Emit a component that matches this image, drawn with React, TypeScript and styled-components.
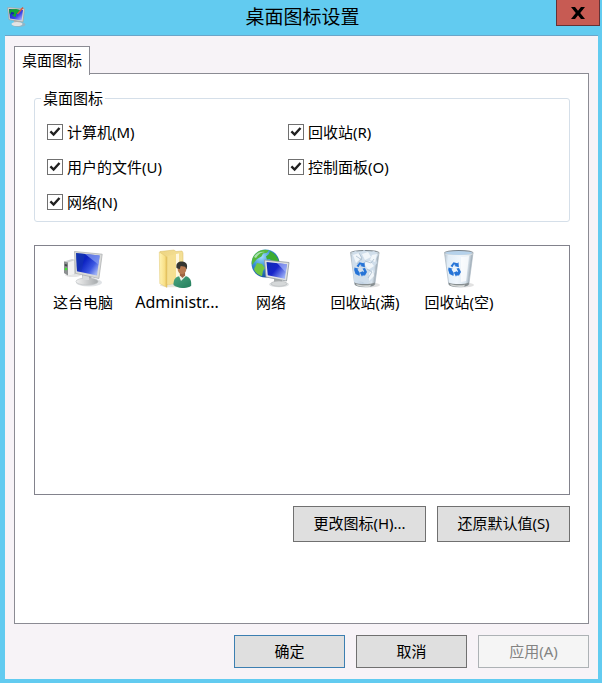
import React from 'react';
import styled, { createGlobalStyle } from 'styled-components';

const GlobalStyle = createGlobalStyle`
  * { box-sizing: border-box; }
  body {
    margin: 0;
    background: #62cbf0;
    color: #000;
    font-family: "Noto Sans", "Noto Sans CJK SC", sans-serif;
    font-size: 15px;
    line-height: 20px;
  }
`;

const Window = styled.main`
  display: flex;
  flex-direction: column;
  min-height: 100vh;
  padding: 0 4px 4px 5px;
  background: #62cbf0;
`;

const TitleBar = styled.header`
  display: grid;
  grid-template-columns: 1fr auto 1fr;
  height: 35px;
  margin-right: -2px;
`;

const TitleIcon = styled.div`
  padding: 6px 0 0 2px;
  svg { display: block; }
`;

const Title = styled.h1`
  margin: 0;
  font-size: 19px;
  font-weight: 400;
  line-height: 35px;
`;

const CloseButton = styled.button`
  display: grid;
  place-items: center;
  justify-self: end;
  width: 44px;
  height: 26px;
  margin: 0;
  padding: 0;
  border: 1px solid #633236;
  border-top: 0;
  background: #c75b53;
`;

const Client = styled.section`
  display: flex;
  flex: 1;
  flex-direction: column;
  padding: 10px 9px 11px;
  border-top: 1px solid #6ba5c9;
  background: #f7f3f7;
`;

const TabList = styled.div`
  display: flex;
`;

const Tab = styled.button`
  z-index: 1;
  height: 29px;
  margin: 0 0 -2px;
  padding: 0 7px 3px;
  border: 1px solid #8b8b93;
  border-bottom: 0;
  background: #fff;
  color: inherit;
  font: inherit;
`;

const Panel = styled.div`
  display: flex;
  flex: 1;
  flex-direction: column;
  padding: 14px 18px 80px 19px;
  border: 1px solid #8b8b93;
  background: #fff;
`;

const Group = styled.fieldset`
  min-width: 0;
  margin: 0 0 23px;
  padding: 0 40px 9px 6px;
  border: 1px solid #d5dfe9;
  border-radius: 3px;
  legend {
    padding: 0 2px;
  }
`;

const Options = styled.div`
  display: grid;
  grid-template-columns: 1fr 1fr;
  row-gap: 15px;
  padding: 14px 0 0 6px;
`;

const Option = styled.label<{ $column: number }>`
  grid-column: ${(p) => p.$column};
  display: flex;
  align-items: center;
  gap: 4px;
`;

const CheckWrap = styled.span`
  display: grid;
  place-items: center;
  > * { grid-area: 1 / 1; }
  svg { pointer-events: none; visibility: hidden; }
  input:checked + svg { visibility: visible; }
`;

const CheckBox = styled.input`
  appearance: none;
  width: 16px;
  height: 16px;
  margin: 0;
  border: 1px solid #707070;
  background: #fff;
`;

const IconList = styled.ul`
  display: flex;
  flex-wrap: wrap;
  align-content: flex-start;
  min-height: 250px;
  margin: 0;
  padding: 2px 1px;
  border: 1px solid #82828c;
  list-style: none;
`;

const IconItem = styled.li<{ $latin?: boolean }>`
  display: flex;
  flex-direction: column;
  align-items: center;
  gap: 4px;
  width: 94px;
  font-size: ${(p) => (p.$latin ? 16 : 15)}px;
`;

const ButtonRow = styled.div`
  display: flex;
  justify-content: flex-end;
  gap: 11px;
  margin-top: 11px;
`;

const Button = styled.button<{ $wide?: boolean; $primary?: boolean }>`
  width: ${(p) => (p.$wide ? 133 : 111)}px;
  height: ${(p) => (p.$wide ? 36 : 33)}px;
  padding: 0 0 2px;
  border: 1px solid ${(p) => (p.$primary ? '#3c7fb1' : '#707070')};
  background: #dfdfdf;
  color: #000;
  font: inherit;
  &:disabled {
    border-color: #adb2b5;
    background: #f5f5f5;
    color: #838383;
  }
`;

const SettingsIcon = () => (
  <svg width="20" height="22" viewBox="0 0 20 22" aria-hidden="true">
    <defs>
      <linearGradient id="setScreen" x1="0" y1="0" x2="1" y2="1">
        <stop offset="0" stopColor="#101cb0" />
        <stop offset=".6" stopColor="#3b46e6" />
        <stop offset="1" stopColor="#c8ccff" />
      </linearGradient>
    </defs>
    <ellipse cx="11.5" cy="18.5" rx="7" ry="2.4" fill="#8fb5c6" />
    <path d="M7 14l6 1v4H7z" fill="#b5b5b5" />
    <ellipse cx="10" cy="18" rx="5.5" ry="2" fill="#e4e4e4" />
    <path d="M.7 1.6 17.500 2.800 16 16 2 13.600z" fill="#d9d8d1" stroke="#9fa49f" strokeWidth=".7" />
    <path d="M2 3l14 1-1.300 10.500L3 12.400z" fill="url(#setScreen)" />
    <path d="M2 3.500 9 3l4 1-2 3-2 1v3l-3-1-1-2-2.500-.5z" fill="#12a535" />
    <path d="m4 6 3 .5v2L4 8z" fill="#1226ad" />
    <path d="m10.500 8 5.500-6.500" stroke="#d5573e" strokeWidth="1.400" />
  </svg>
);

const CheckMark = () => (
  <svg width="12" height="12" viewBox="0 0 12 12" aria-hidden="true">
    <path d="m1.400 5.400 3.200 3.200 5.900-6.600" fill="none" stroke="#202020" strokeWidth="2.400" />
  </svg>
);

const ComputerIcon = () => (
  <svg width="40" height="40" viewBox="0 0 40 40" aria-hidden="true">
    <defs>
      <linearGradient id="pcScreen" x1="0" y1="0" x2="1" y2=".7">
        <stop offset="0" stopColor="#1036b4" />
        <stop offset=".4" stopColor="#0c22c2" />
        <stop offset=".75" stopColor="#3c58e2" />
        <stop offset="1" stopColor="#9fb2f4" />
      </linearGradient>
      <linearGradient id="pcStand" x1="0" y1="0" x2="1" y2="0">
        <stop offset="0" stopColor="#f2f2f2" />
        <stop offset="1" stopColor="#a5a9ac" />
      </linearGradient>
    </defs>
    <ellipse cx="10" cy="27" rx="8" ry="2" fill="#e6e6e6" />
    <path d="M1 13.5 9 11l4 1v14l-7 1.5L1 25z" fill="#d0d3d4" />
    <path d="m1 13.5 4 1v13L1 25z" fill="#8c9091" />
    <path d="m5 14.5 6-2v14l-6 1z" fill="#f2f2f2" />
    <path d="m1.8 16 2.4.6v2l-2.4-.5z" fill="#424a4b" />
    <circle cx="3" cy="21" r="1.3" fill="#40e531" />
    <ellipse cx="26" cy="34.5" rx="13" ry="4" fill="#e0e3e6" />
    <path d="m19 25 9 2 1 6-9 1z" fill="#a8adaf" />
    <ellipse cx="24" cy="33.5" rx="11" ry="3.6" fill="url(#pcStand)" stroke="#bbbec0" strokeWidth=".6" />
    <path d="m20 26 6 1v5h-6z" fill="#d9dcdc" />
    <path d="m11.5 3.500 27.700 2.700-3.300 24.300-23.400-5.200z" fill="#dadbd9" stroke="#a7abad" strokeWidth=".7" />
    <path d="m13 5 23.700 2.500-2.700 20-20-4.300z" fill="url(#pcScreen)" />
    <path d="m22 6 14.700 1.500-1.300 9z" fill="#91a7f5" opacity=".65" />
    <path d="m13 5 9 1-3.500 17.500-4.500-.5z" fill="#1838a9" opacity=".5" />
  </svg>
);

const UserFilesIcon = () => (
  <svg width="40" height="40" viewBox="0 0 40 40" aria-hidden="true">
    <defs>
      <linearGradient id="folderBack" x1="0" y1="0" x2="1" y2="1">
        <stop offset="0" stopColor="#edd481" />
        <stop offset="1" stopColor="#f9e9a7" />
      </linearGradient>
      <linearGradient id="folderFront" x1="0" y1="0" x2="1" y2="0">
        <stop offset="0" stopColor="#fff4b5" />
        <stop offset=".7" stopColor="#f8df86" />
        <stop offset="1" stopColor="#dfb951" />
      </linearGradient>
      <linearGradient id="userShirt" x1="0" y1="0" x2="1" y2="1">
        <stop offset="0" stopColor="#4aa580" />
        <stop offset="1" stopColor="#247e5c" />
      </linearGradient>
    </defs>
    <ellipse cx="17" cy="37.300" rx="14" ry="2" fill="#e8e6dd" />
    <path d="M3 3.500 17 2l2 1.500 6-.5 1 2v29L9 37z" fill="url(#folderBack)" stroke="#d8ba61" strokeWidth=".5" />
    <path d="m19 6 3-.5V33l-3 1z" fill="#fff8df" />
    <path d="m11 8 8-2v28l-8 3z" fill="#f5df91" />
    <path d="M2.300 4 10 9v30.500l-7.200-3.900z" fill="url(#folderFront)" stroke="#e0c56f" strokeWidth=".5" />
    <path d="M16.500 37c-.2-5 1.800-8.500 6-8.800l6-.2c4 1 5.700 4 5.700 7.500v2.200c-4 3.400-13.600 3-17.700-.7z" fill="url(#userShirt)" />
    <path d="m22 28 2 5 5-5-.6-3h-5z" fill="#f1f2e8" />
    <path d="M23 22h5v5.500L25.500 30 23 27.400z" fill="#9f6543" />
    <ellipse cx="25" cy="20.500" rx="4.400" ry="5.500" fill="#b97a51" />
    <path d="M19.500 20c-.7-5 2-6.500 5.800-6.400 4 .2 6 3.300 4.200 8l-1.300-2.900-4.500-.6-1 3.200z" fill="#353632" />
  </svg>
);

const NetworkIcon = () => (
  <svg width="40" height="40" viewBox="0 0 40 40" aria-hidden="true">
    <defs>
      <radialGradient id="globe" cx=".35" cy=".25" r=".8">
        <stop offset="0" stopColor="#a6dfff" />
        <stop offset=".45" stopColor="#3a91d7" />
        <stop offset="1" stopColor="#154b9b" />
      </radialGradient>
      <linearGradient id="netScreen" x1="0" y1="0" x2="1" y2=".7">
        <stop offset="0" stopColor="#102cb0" />
        <stop offset=".5" stopColor="#1724c9" />
        <stop offset="1" stopColor="#9cb0f7" />
      </linearGradient>
    </defs>
    <circle cx="14.500" cy="15.500" r="14" fill="url(#globe)" />
    <path d="M6 4.500C9 1.800 14 1 18 2.300l-2 2.400-4 .8-1.500 3L6 11l-2.500 3-2.400 3C0 12 2 7.500 6 4.500z" fill="#54b83d" />
    <path d="M19 3c4 2 7.700 5.700 9 10.500L22 15l-3-4-3 .5-1-3 3-2.500z" fill="#3dac32" />
    <path d="m6 15 5 1 3 4-2 3-1 5.200C7 27 4 24.500 3 21z" fill="#70c642" />
    <path d="M3 9c2-4 7-6 11-5-5 .5-7 3-9 6z" fill="#dffaff" opacity=".6" />
    <ellipse cx="28" cy="36.500" rx="10" ry="2.700" fill="#dfe2e4" />
    <path d="m23 30 8 2v4l-8 .5z" fill="#a7abac" />
    <ellipse cx="28" cy="35.700" rx="8" ry="2.600" fill="#d5d8d9" stroke="#a9adaf" strokeWidth=".5" />
    <path d="m13.500 12 24.500 2.500-2.500 18.500-20.500-4z" fill="#e0e2e3" stroke="#92999e" strokeWidth=".8" />
    <path d="m15.500 14 20.500 2.200-2.200 14.600-17-3.600z" fill="url(#netScreen)" />
    <path d="m26 15.100 10 1.100-1.300 8z" fill="#a9bafc" opacity=".65" />
  </svg>
);

const BinIcon = ({ full = false }: { full?: boolean }) => {
  const id = full ? 'full' : 'empty';
  return (
    <svg width="40" height="40" viewBox="0 0 40 40" aria-hidden="true">
      <defs>
        <linearGradient id={`glass-${id}`} x1="0" y1="0" x2="1" y2=".15">
          <stop offset="0" stopColor="#b2bfcb" />
          <stop offset=".15" stopColor="#e1edf7" />
          <stop offset=".55" stopColor={full ? '#c1d1e2' : '#f0f6fc'} />
          <stop offset=".85" stopColor="#dbe6ef" />
          <stop offset="1" stopColor="#8d9aa5" />
        </linearGradient>
        <linearGradient id={`rim-${id}`} x1="0" y1="0" x2="0" y2="1">
          <stop offset="0" stopColor="#747e86" />
          <stop offset="1" stopColor="#eef3f6" />
        </linearGradient>
      </defs>
      <ellipse cx="24" cy="37" rx="11" ry="2.500" fill="#e1e1e1" />
      <path d="m5.500 5 4.300 31.500c4 3.200 16 3.200 20 0L34 5z" fill={`url(#glass-${id})`} stroke="#abb8c3" strokeWidth=".7" />
      <path d="M9.500 34.500c4 2 16 2 20.500 0l-.5 2.500c-4 2.800-15.500 2.800-19.500 0z" fill="#878e90" />
      <path d="M11 36c5 1.500 11 1.500 15 .7l-1 2c-6 .6-10 0-13-1.200z" fill="#d6d9d7" />
      <ellipse cx="19.700" cy="5" rx="14.200" ry="2.500" fill={full ? '#cfdee9' : '#b6d2eb'} stroke={`url(#rim-${id})`} strokeWidth="1.200" />
      {full ? (
        <g>
          <path d="m7 7 3-4 5 2 4-3 5 3 5-2 4 4-2 4 1 4-3 4 1 5-4 4 1 5-7 2-5-2-6 1z" fill="#d0deeb" />
          <path d="m8 7 6-2 2 5-5 5z M17 6l6-2 3 5-6 3z M27 7l5-1-2 8-5-2z M19 15l6-2 4 5-6 4z M24 25l4-3 1 6-5 5z" fill="#f1f6fa" />
          <path d="m14 5 3 5-5 6m8-3 6 2 3-4m-7 10 5 3-4 6m-6-18-6-4" fill="none" stroke="#a9bccd" strokeWidth=".8" />
        </g>
      ) : (
        <path d="m22 9 8-1-3 25-5 1z" fill="#fff" opacity=".7" />
      )}
      <g fill="#2674d7">
        <path d="m11.500 18 3-3.700 3.800 1 1.200-1 .4 5-4.600-1.300 1.300-1-1.600-.5-1.500 2.700z" />
        <path d="m9.500 19.500 4.200 1.300-1.200.8 2.300 3.500-.3 2.800-4-1.800-1.300-4z" />
        <path d="m17.500 20.500 2.500-.4 2 3.800-2 3.500-2.500.1-.5 1.200-2.200-4.200 3.500-1.500-.3 1.200 1.200-.6z" />
      </g>
    </svg>
  );
};

const options = [
  { label: '计算机(M)', column: 1 },
  { label: '回收站(R)', column: 2 },
  { label: '用户的文件(U)', column: 1 },
  { label: '控制面板(O)', column: 2 },
  { label: '网络(N)', column: 1 },
];

const icons = [
  { label: '这台电脑', icon: <ComputerIcon /> },
  { label: 'Administr...', icon: <UserFilesIcon />, latin: true },
  { label: '网络', icon: <NetworkIcon /> },
  { label: '回收站(满)', icon: <BinIcon full /> },
  { label: '回收站(空)', icon: <BinIcon /> },
];

export default function App() {
  return (
    <>
      <GlobalStyle />
      <Window>
        <TitleBar>
          <TitleIcon><SettingsIcon /></TitleIcon>
          <Title>桌面图标设置</Title>
          <CloseButton type="button" aria-label="关闭">
            <svg width="14" height="12" viewBox="0 0 14 12" aria-hidden="true">
              <path d="M0 0h4l3 3.700L10 0h4L9.200 6l4.800 6h-4L7 8.300 4 12H0l4.800-6z" fill="#000" />
            </svg>
          </CloseButton>
        </TitleBar>
        <Client>
          <TabList role="tablist">
            <Tab type="button" role="tab" aria-selected="true">桌面图标</Tab>
          </TabList>
          <Panel role="tabpanel">
            <Group>
              <legend>桌面图标</legend>
              <Options>
                {options.map((option) => (
                  <Option key={option.label} $column={option.column}>
                    <CheckWrap>
                      <CheckBox type="checkbox" defaultChecked />
                      <CheckMark />
                    </CheckWrap>
                    {option.label}
                  </Option>
                ))}
              </Options>
            </Group>
            <IconList>
              {icons.map((item) => (
                <IconItem key={item.label} $latin={item.latin}>
                  {item.icon}
                  <span>{item.label}</span>
                </IconItem>
              ))}
            </IconList>
            <ButtonRow>
              <Button type="button" $wide>更改图标(H)...</Button>
              <Button type="button" $wide>还原默认值(S)</Button>
            </ButtonRow>
          </Panel>
          <ButtonRow>
            <Button type="button" $primary>确定</Button>
            <Button type="button">取消</Button>
            <Button type="button" disabled>应用(A)</Button>
          </ButtonRow>
        </Client>
      </Window>
    </>
  );
}
